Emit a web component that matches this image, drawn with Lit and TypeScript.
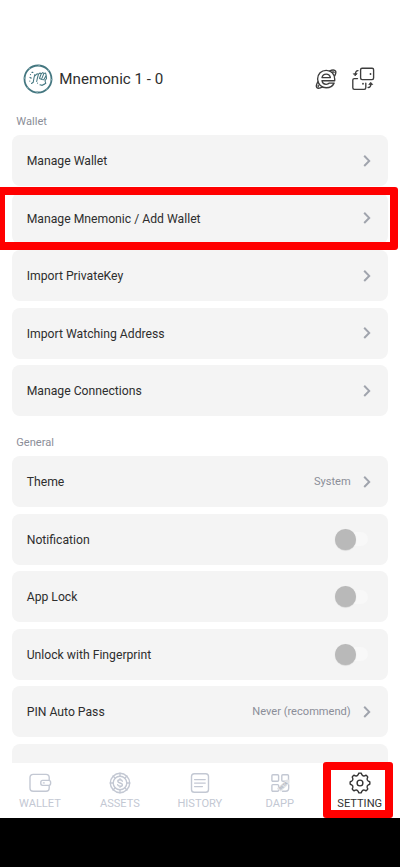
import { LitElement, html, css, svg, nothing } from "lit";
import { customElement, property } from "lit/decorators.js";

type Row = { label: string; value?: string; toggle?: boolean };

const WALLET_ROWS: Row[] = [
  { label: "Manage Wallet" },
  { label: "Manage Mnemonic / Add Wallet" },
  { label: "Import PrivateKey" },
  { label: "Import Watching Address" },
  { label: "Manage Connections" },
];

const GENERAL_ROWS: Row[] = [
  { label: "Theme", value: "System" },
  { label: "Notification", toggle: true },
  { label: "App Lock", toggle: true },
  { label: "Unlock with Fingerprint", toggle: true },
  { label: "PIN Auto Pass", value: "Never (recommend)" },
  { label: "" },
];

// Eight-toothed gear outline centred on (12, 12).
const gearPath = (() => {
  const points: string[] = [];
  const teeth = 8;
  const step = (Math.PI * 2) / teeth;
  const at = (r: number, a: number) =>
    `${(12 + r * Math.sin(a)).toFixed(2)} ${(12 - r * Math.cos(a)).toFixed(2)}`;
  for (let i = 0; i < teeth; i++) {
    const a = i * step;
    points.push(
      `${i ? "L" : "M"}${at(9.8, a - 0.13)}`,
      `Q${at(10.1, a)} ${at(9.8, a + 0.13)}`,
      `L${at(8.5, a + 0.22)}`,
      `Q${at(7.2, a + step / 2)} ${at(8.5, a + step - 0.22)}`
    );
  }
  return points.join("") + "Z";
})();

const ICONS: Record<string, unknown> = {
  wallet: svg`
    <rect x="2" y="3.4" width="19.2" height="16.8" rx="3.2"/>
    <rect x="12.8" y="9.4" width="9.8" height="5" rx="1.8" fill="#fff"/>
    <path d="M15.4 11.9h.8"/>`,
  assets: svg`
    <circle cx="12" cy="12" r="9.7"/><circle cx="12" cy="12" r="6.8"/>
    <path d="M12 2.3v2.9M12 18.8v2.9M2.3 12h2.9M18.8 12h2.9M5.1 5.1l2.1 2.1M16.8 16.8l2.1 2.1M5.1 18.9l2.1-2.1M16.8 7.2l2.1-2.1"/>
    <path d="M14.3 10.2c-.2-1-1.1-1.5-2.3-1.5-1.3 0-2.2.6-2.2 1.6 0 2.3 4.6 1 4.6 3.4 0 1-.9 1.6-2.3 1.6s-2.3-.6-2.5-1.6M12 7.7v1M12 15.3v1"/>`,
  history: svg`
    <rect x="3.5" y="2.7" width="17" height="18.6" rx="2.8"/>
    <path d="M6.6 8.6h10.6M6.6 12.1h10.6M6.6 15.6h7.8"/>`,
  dapp: svg`
    <rect x="3.9" y="3.7" width="6.7" height="6.6" rx="1"/>
    <rect x="13.8" y="3.7" width="6.7" height="6.6" rx="1"/>
    <rect x="3.9" y="13.6" width="6.7" height="6.6" rx="1"/>
    <path d="M20.7 13.7v3.3a3.2 3.2 0 0 1-3.2 3.2h-3"/>
    <path d="M8.8 17.8L18.7 8.6l2.8.2v3.4l-8.7 8.2z" fill="#e3e4e7" stroke="none"/>
    <text class="beta" x="15.2" y="16.2" transform="rotate(-42 15.2 14.7)">BETA</text>`,
  setting: svg`<path d=${gearPath}/><circle cx="12" cy="12" r="2.9"/>`,
};

@customElement("setting-row")
class SettingRow extends LitElement {
  @property({ attribute: false }) row!: Row;

  static styles = css`
    :host {
      display: flex;
      align-items: center;
      box-sizing: border-box;
      height: 51px;
      padding: 0 15.3px 0 14.4px;
      border-radius: 8px;
      background: #f4f4f4;
    }
    .label {
      flex: 1;
      padding-top: 1.3px;
      font-size: 12.2px;
      color: #2e2e2e;
    }
    .value {
      padding-top: 0.6px;
      font-size: 11.1px;
      color: #8b8e98;
      margin-right: 11.7px;
    }
    .chevron {
      width: 10px;
      height: 14px;
      fill: none;
      stroke: #a0a4ad;
      stroke-width: 2;
    }
    .toggle {
      width: 26px;
      height: 14px;
      margin-right: 4.8px;
      border-radius: 7px;
      background: #f8f8f8;
      display: flex;
      align-items: center;
    }
    .knob {
      width: 21px;
      height: 21px;
      flex: none;
      margin-left: -6.5px;
      border-radius: 50%;
      background: #b9b9b9;
      box-shadow: 0 0.5px 1px #0003;
    }
  `;

  render() {
    const { label, value, toggle } = this.row;
    if (!label) return nothing;
    return html`
      <span class="label">${label}</span>
      ${value ? html`<span class="value">${value}</span>` : nothing}
      ${toggle
        ? html`<span class="toggle"><span class="knob"></span></span>`
        : html`<svg class="chevron" viewBox="0 0 10 14"><path d="M2.2 1.8l5 5.1-5 5.1"/></svg>`}
    `;
  }
}

@customElement("app-root")
class AppRoot extends LitElement {
  static styles = css`
    :host {
      display: flex;
      flex-direction: column;
      position: relative;
      width: 400px;
      height: 867px;
      overflow: hidden;
      background: #fff;
      font-family: Roboto, "Liberation Sans", sans-serif;
    }
    header {
      display: flex;
      align-items: center;
      flex: none;
      height: 46px;
      padding: 56px 25px 0 22.5px;
    }
    .avatar {
      width: 30px;
      height: 30px;
      fill: none;
      stroke: #447780;
    }
    h1 {
      flex: 1;
      margin: 0 0 0 6.8px;
      padding-top: 0.6px;
      font-size: 15.15px;
      font-weight: 400;
      color: #2e2e2e;
    }
    .tool {
      width: 24px;
      height: 24px;
      margin-left: 13px;
      fill: none;
      stroke: #3d3d3d;
      stroke-width: 1.35;
      stroke-linecap: round;
      stroke-linejoin: round;
    }
    main {
      flex: 1;
      min-height: 0;
      overflow: hidden;
    }
    h2 {
      margin: 0;
      padding: 11px 0 0 16.3px;
      height: 22.2px;
      font-size: 11.1px;
      line-height: 17px;
      font-weight: 400;
      color: #8b8e98;
    }
    .group {
      display: flex;
      flex-direction: column;
      gap: 6.5px;
      padding: 0 12.3px;
    }
    .group + h2 {
      padding-top: 17.8px;
    }
    nav {
      display: flex;
      flex: none;
      height: 55.5px;
      background: #fff;
    }
    .tab {
      display: flex;
      flex-direction: column;
      align-items: center;
      width: 79.95px;
      padding-top: 8px;
      font-size: 11.1px;
      line-height: 14px;
      color: #c3c8d3;
    }
    .active {
      color: #333;
    }
    .icon {
      width: 24px;
      height: 24px;
      margin-bottom: 2px;
      fill: none;
      stroke: currentColor;
      stroke-width: 1.4;
      stroke-linecap: round;
      stroke-linejoin: round;
    }
    .beta {
      font-size: 4px;
      font-weight: 700;
      text-anchor: middle;
      fill: #aeb4bf;
      stroke: none;
    }
    .system {
      flex: none;
      height: 49px;
      background: #000;
    }
    .mark {
      position: absolute;
      box-sizing: border-box;
      border: 8px solid #f00;
      border-radius: 3px;
    }
    .mark-row {
      left: -3px;
      top: 187px;
      width: 401px;
      height: 63px;
    }
    .mark-tab {
      left: 323px;
      top: 762px;
      width: 70px;
      height: 56px;
    }
  `;

  render() {
    const tabs = ["wallet", "assets", "history", "dapp", "setting"];
    return html`
      <header>
        <svg class="avatar" viewBox="0 0 30 30">
          <circle cx="15" cy="15" r="13.5" stroke-width="1.8"/>
          <circle cx="15" cy="15" r="13.5" stroke-width="1.8" stroke="#83a7ad" stroke-dasharray="1.5 9.1"/>
          <path stroke-width="1.05" stroke-linecap="round" stroke-linejoin="round"
            d="M8.5 19.5l1.7-1.2.8-4.5.8-3.3M11.3 12.5l2.7-2.7 1.5.4-1.2 4.3-.6 3M15.5 10.2l1.5-1.2 1.2.8-1.5 4M18.2 9.8l1.5-1.2 1.2.8-2 5M20.9 9.4l1.7-.3.6 2.2-2.4 4.5M23.2 11.3l.3 3.2-1.5 2.3.8 2.5-2 1.2M16.5 14.5l2.5 1 1.8.3"/>
          <path stroke-width="1.2" stroke-linecap="round" d="M7.5 10.5v.1M9 8.3l.8.1M7 13.5l1.2.6M6.8 17v.1M17 20.8l2 .6 1.8-.9M14.5 19v.1"/>
        </svg>
        <h1>Mnemonic 1 - 0</h1>
        <svg class="tool" viewBox="0 0 24 24">
          <path d="M8 10.6h8.4c-.5-2.4-2-3.5-4.2-3.5s-3.7 1.2-4.2 3.5z"/>
          <path d="M8 13.7h12.7V12c0-5-3.6-8.7-8.5-8.7S3.6 7 3.6 12s3.7 8.7 8.6 8.7c3.7 0 6.6-1.7 7.9-4.6h-4.7c-.8.8-1.8 1.2-3.2 1.2-2.3 0-3.9-1.3-4.2-3.6z"/>
          <path d="M15.3 4c3.3-1.4 5.5-1.2 6.3.2.7 1.2.1 2.8-.9 4.7M4 14.7c-1.6 2.5-2.1 4.7-1.2 5.8 1 1.2 3.3.8 5.9-.6M18 5.2c1-.3 1.9-.2 2.1.2M4.3 18.3c-.3.6-.2 1 0 1.2"/>
        </svg>
        <svg class="tool" viewBox="0 0 24 24">
          <rect x="9.6" y="1.2" width="13" height="11.4" rx="1.5"/>
          <path d="M6.5 11.6H3.3a1.5 1.5 0 0 0-1.5 1.5v7.7a1.5 1.5 0 0 0 1.5 1.5h10a1.5 1.5 0 0 0 1.5-1.5v-4.6"/>
          <path stroke-width="1.8" d="M19.5 6.9v.1M12 16.7v.1"/>
          <path d="M7 3.6C5.2 3.7 4.4 4.8 4.4 7.5M17.1 20.5c2-.1 2.8-1.3 2.8-3.8"/>
          <path fill="#3d3d3d" stroke-width=".8" d="M2.7 6.7h3.5L4.4 8.6zM18.2 17.5h3.5l-1.8-2z"/>
        </svg>
      </header>
      <main>
        <h2>Wallet</h2>
        <div class="group">
          ${WALLET_ROWS.map((row) => html`<setting-row .row=${row}></setting-row>`)}
        </div>
        <h2>General</h2>
        <div class="group">
          ${GENERAL_ROWS.map((row) => html`<setting-row .row=${row}></setting-row>`)}
        </div>
      </main>
      <nav>
        ${tabs.map(
          (name) => html`
            <div class="tab ${name === "setting" ? "active" : ""}">
              <svg class="icon" viewBox="0 0 24 24">${ICONS[name]}</svg>
              <span>${name.toUpperCase()}</span>
            </div>
          `
        )}
      </nav>
      <div class="system"></div>
      <div class="mark mark-row"></div>
      <div class="mark mark-tab"></div>
    `;
  }
}
